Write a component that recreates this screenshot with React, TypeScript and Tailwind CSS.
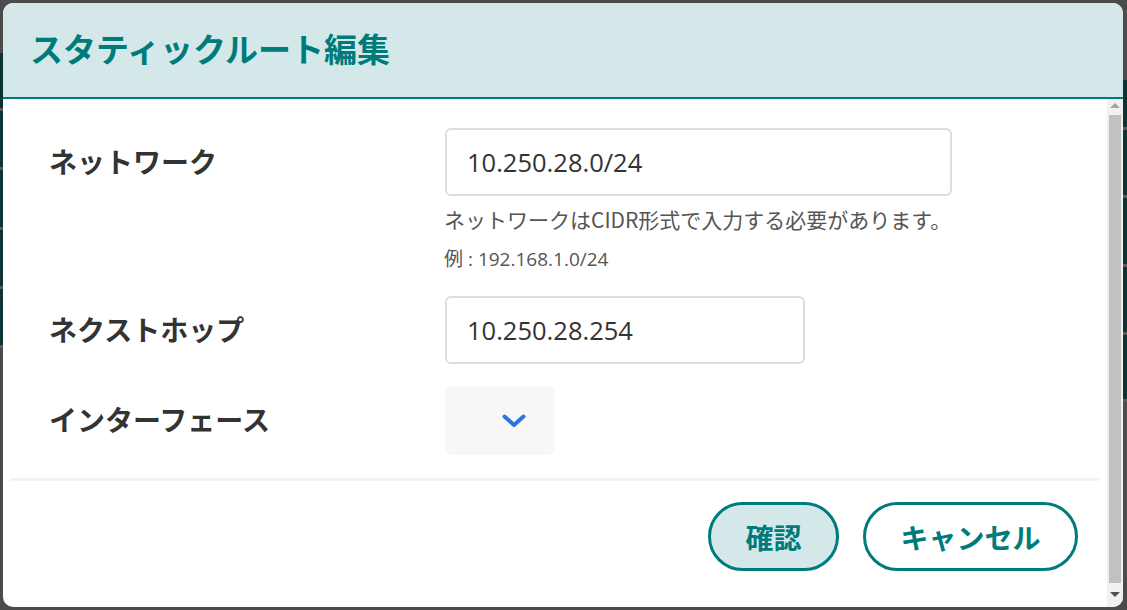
import { useState } from "react";

const font = "font-['Open_Sans','Noto_Sans_CJK_JP',sans-serif]";
const jp = "font-['Noto_Sans_CJK_JP',sans-serif]";

function BackdropStrip({ top, rows }: { top: number; rows: number[] }) {
  // the page behind the modal, only a few pixels of it show
  return (
    <div className="flex h-full flex-col bg-[#4b4b4b]">
      <div style={{ height: top }} />
      {rows.map((h, i) => (
        <div
          key={i}
          className="border-b-[3px] border-[#5a5a5a] bg-[#0b3434]"
          style={{ height: h }}
        />
      ))}
    </div>
  );
}

function FormRow({
  label,
  children,
  className,
}: {
  label: string;
  children: React.ReactNode;
  className?: string;
}) {
  return (
    <div className={`flex ${className ?? ""}`}>
      <div className="flex h-[66px] w-[395px] shrink-0 items-center">
        <span className={`${jp} text-[28px] font-bold leading-none text-[#333333]`}>
          {label}
        </span>
      </div>
      <div className="flex flex-col">{children}</div>
    </div>
  );
}

export default function App() {
  const [network, setNetwork] = useState("10.250.28.0/24");
  const [nextHop, setNextHop] = useState("10.250.28.254");

  return (
    <div className={`flex h-[610px] w-[1127px] overflow-hidden bg-[#4b4b4b] ${font}`}>
      <div className="w-[3px] shrink-0">
        <BackdropStrip top={53} rows={[58, 59, 60, 59, 59]} />
      </div>

      {/* ── Dialog ─────────────────────────────────────── */}
      <div className="my-[3px] flex w-[1120px] shrink-0 flex-col overflow-hidden rounded-[10px] bg-white">
        <header className="flex h-[96px] shrink-0 items-center border-b-2 border-[#007b7b] bg-[#d4e8ea] pb-[4px] pl-[27px]">
          <h1 className={`${jp} text-[33px] font-bold leading-none text-[#007b7b]`}>
            スタティックルート編集
          </h1>
        </header>

        <div className="flex min-h-0 flex-1">
          <div className="flex flex-1 flex-col">
            <div className="pl-[46px] pt-[29px]">
              <FormRow label="ネットワーク">
                <input
                  value={network}
                  onChange={(e) => setNetwork(e.target.value)}
                  className="ml-[1px] h-[68px] w-[507px] rounded-md border-2 border-[#dddddd] px-[20px] text-[25.5px] text-[#333333] outline-none"
                />
                <p className={`${jp} mt-[9px] text-[21px] leading-[28px] text-[#555555]`}>
                  ネットワークはCIDR形式で入力する必要があります。
                </p>
                <p className="mt-[12px] text-[19px] leading-[26px] text-[#555555]">
                  <span className={jp}>例</span> : 192.168.1.0/24
                </p>
              </FormRow>

              <FormRow label="ネクストホップ" className="mt-[24px]">
                <input
                  value={nextHop}
                  onChange={(e) => setNextHop(e.target.value)}
                  className="ml-[1px] h-[68px] w-[360px] rounded-md border-2 border-[#dddddd] px-[20px] text-[25.5px] text-[#333333] outline-none"
                />
              </FormRow>

              <FormRow label="インターフェース" className="mt-[22px]">
                <button
                  type="button"
                  className="ml-[1px] flex h-[69px] w-[109px] items-center justify-center rounded-md bg-[#f7f7f7] pl-[28px]"
                >
                  <svg width="24" height="14" viewBox="0 0 24 14" fill="none">
                    <path
                      d="M2.5 2.5 L12 11 L21.5 2.5"
                      stroke="#2f74e0"
                      strokeWidth="4"
                      strokeLinecap="round"
                      strokeLinejoin="round"
                    />
                  </svg>
                </button>
              </FormRow>
            </div>

            <div className="ml-[7px] mr-[8px] mt-[23px] h-[3px] bg-[#f3f3f3]" />

            <div className="mt-[21px] flex justify-end gap-[24px] pr-[29px]">
              <button
                type="button"
                className={`${jp} h-[69px] w-[131px] rounded-full border-[3px] border-[#007b7b] bg-[#d4e8ea] text-[28px] font-bold text-[#007b7b]`}
              >
                確認
              </button>
              <button
                type="button"
                className={`${jp} h-[69px] w-[215px] rounded-full border-[3px] border-[#007b7b] bg-white text-[28px] font-bold text-[#007b7b]`}
              >
                キャンセル
              </button>
            </div>
          </div>

          {/* scrollbar */}
          <div className="flex w-[16px] shrink-0 flex-col items-center bg-[#f1f1f1] py-[4px]">
            <div className="h-0 w-0 border-x-[5px] border-b-[5px] border-x-transparent border-b-[#a3a3a3]" />
            <div className="mt-[7px] w-[12px] flex-1 bg-[#c1c1c1]" />
            <div className="mt-[9px] mb-[6px] h-0 w-0 border-x-[5px] border-t-[5px] border-x-transparent border-t-[#505050]" />
          </div>
        </div>
      </div>

      <div className="w-[4px] shrink-0">
        <BackdropStrip top={80} rows={[50, 68, 69, 68, 67]} />
      </div>
    </div>
  );
}
